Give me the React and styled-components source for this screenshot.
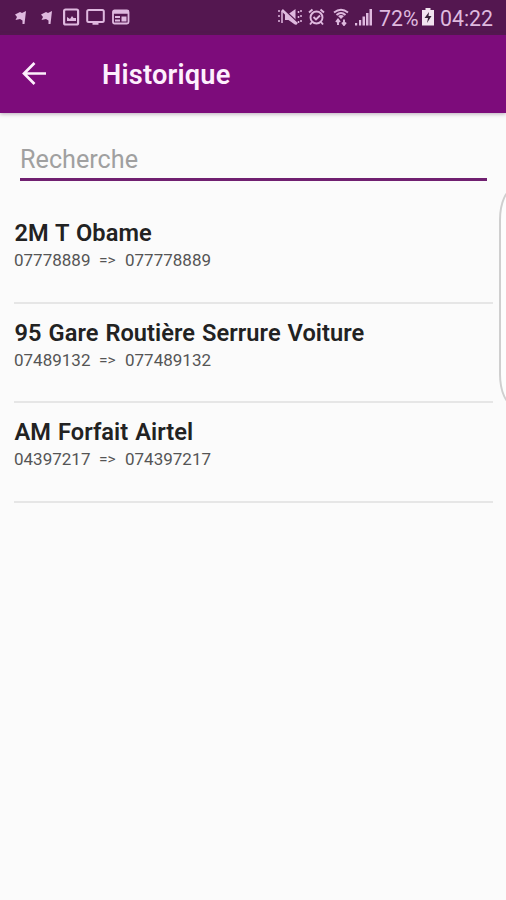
import React from "react";
import styled, { createGlobalStyle } from "styled-components";

const GlobalStyle = createGlobalStyle`
  * { box-sizing: border-box; }
  body { margin: 0; background: #fbfbfb; font-family: Roboto, "Liberation Sans", sans-serif; }
`;

const Screen = styled.div`
  position: relative;
  display: flex;
  flex-direction: column;
  width: 506px;
  height: 900px;
  overflow: hidden;
  background: #fbfbfb;
`;

const StatusBar = styled.div`
  display: flex;
  justify-content: space-between;
  height: 35px;
  flex: none;
  padding: 0 12px 0 14px;
  background: #541750;
  color: #dfb9df;
`;

const StatusGroup = styled.div`
  display: flex;
  align-items: center;
  height: 34px;
`;

const StatusIcon = styled.svg`
  display: block;
  flex: none;
  margin-left: ${(p) => p.$gap || 0}px;
`;

const StatusText = styled.span`
  margin-left: ${(p) => p.$gap || 0}px;
  width: ${(p) => p.$width}px;
  font-size: 21.3px;
  line-height: 35px;
  white-space: nowrap;
  padding-top: 2px;
`;

const AppBar = styled.header`
  display: flex;
  align-items: center;
  flex: none;
  height: 78px;
  padding-left: 22px;
  background: #7d0c7b;
  box-shadow: 0 1px 4px rgba(80, 50, 80, 0.4);
  color: #fdeffd;
`;

const BackButton = styled.button`
  display: flex;
  width: 25px;
  height: 25px;
  margin-top: -2px;
  padding: 0;
  border: 0;
  background: none;
  color: inherit;
`;

const Title = styled.h1`
  margin: 1px 0 0 55px;
  font-size: 27.2px;
  font-weight: 600;
  line-height: 32px;
  letter-spacing: 0.2px;
`;

const SearchField = styled.input`
  flex: none;
  width: 467px;
  height: 46px;
  margin: 22px 0 0 20px;
  padding: 5px 0 0;
  border: 0;
  border-bottom: 3px solid #702070;
  border-radius: 0;
  outline: 0;
  background: transparent;
  font: 400 25.2px/36px Roboto, sans-serif;
  &::placeholder { color: #a0a0a0; opacity: 1; }
`;

const History = styled.ul`
  margin: 23px 13px 0 14px;
  padding: 0;
  list-style: none;
`;

const Entry = styled.li`
  height: 99.5px;
  padding-top: 14px;
  border-bottom: 2px solid #e6e6e6;
`;

const EntryName = styled.div`
  padding-left: 0.5px;
  color: #222;
  font-size: 23.6px;
  font-weight: 600;
  line-height: 30px;
  letter-spacing: 0.06px;
  word-spacing: 1px;
  white-space: nowrap;
`;

const EntryNumbers = styled.div`
  display: flex;
  color: #555;
  font-size: 17px;
  line-height: 24px;
`;

const NumberPart = styled.span`
  width: ${(p) => p.$width}px;
  font-size: ${(p) => p.$size || 17}px;
`;

const EdgeHandle = styled.div`
  position: absolute;
  top: 188px;
  left: 499px;
  width: 30px;
  height: 218px;
  border: 2px solid #cfcfcf;
  border-radius: 18px / 38px;
  background: #fdfdfd;
`;

const FlagIcon = ({ gap }) => (
  <StatusIcon width="14" height="16" viewBox="0 0 14 16" $gap={gap} fill="currentColor">
    <path d="M1 5.5l5-2.5 2 1 4-2-1.5 13H8.5V11.5L6 10l-4.500 1 1.500-3z" />
  </StatusIcon>
);

const entries = [
  { name: "2M T Obame", from: "07778889", to: "077778889" },
  { name: "95 Gare Routière Serrure Voiture", from: "07489132", to: "077489132" },
  { name: "AM Forfait Airtel", from: "04397217", to: "074397217" },
];

export default function App() {
  return (
    <>
      <GlobalStyle />
      <Screen>
        <StatusBar>
          <StatusGroup>
            <FlagIcon />
            <FlagIcon gap={12} />
            <StatusIcon width="17" height="18" viewBox="0 0 17 18" $gap={9} fill="none" stroke="currentColor" strokeWidth="2.2">
              <rect x="1.1" y="1.5" width="14" height="15" rx="1.5" />
              <path d="M4 13V9l3 2 2-3 1.5 2H13v3z" fill="currentColor" stroke="none" />
            </StatusIcon>
            <StatusIcon width="20" height="18" viewBox="0 0 20 18" $gap={6} fill="none" stroke="currentColor" strokeWidth="2">
              <rect x="1.2" y="2" width="16.6" height="12" rx="1.5" />
              <path d="M6.5 15.5h6" strokeWidth="2.5" />
            </StatusIcon>
            <StatusIcon width="18" height="18" viewBox="0 0 18 18" $gap={6} fill="none" stroke="currentColor" strokeWidth="1.8">
              <rect x="1" y="2.5" width="15.5" height="13" rx="1.5" />
              <path d="M1 4h15.5" strokeWidth="3.5" />
              <path d="M3 9h5M3 12.5h5" />
              <path d="M9.5 8.5h5v5h-5z" fill="currentColor" stroke="none" />
            </StatusIcon>
          </StatusGroup>
          <StatusGroup>
            <StatusIcon width="26" height="18" viewBox="0 0 26 18" fill="none" stroke="currentColor" strokeWidth="1.5">
              <path d="M8 6h3.5l7-5v16l-7-5H8z" fill="currentColor" stroke="none" />
              <path d="M5 0l16 15" stroke="#541750" strokeWidth="2" />
              <path d="M5 2l15 14" strokeWidth="2.5" />
              <path d="M5 3v12M2 2v2m0 3v2m0 3v2M21.5 3v2m0 3v2m0 3v2M24 2v2m0 3v2m0 3v2" />
            </StatusIcon>
            <StatusIcon width="17" height="18" viewBox="0 0 17 18" $gap={5} fill="none" stroke="currentColor" strokeWidth="1.9">
              <circle cx="8.5" cy="9.5" r="6" />
              <path d="M1 4.5l3.5-3M16 4.5l-3.5-3M5.5 9l2.5 2.5 4-4M4 14l-2 2.5M13 14l2 2.5" />
            </StatusIcon>
            <StatusIcon width="16" height="18" viewBox="0 0 16 18" $gap={8} fill="none" stroke="currentColor" strokeWidth="1.9">
              <path d="M1 4.5q7-5.5 14 0M3.5 7q4.5-4 9 0" />
              <path d="M5 8q3-2 6 0l-3 3z" fill="currentColor" stroke="none" />
              <path d="M5 17v-5m-2 2l2-2.5L7 14M11 11.5v5m-2-2l2 2.5 2-2.5" />
            </StatusIcon>
            <StatusIcon width="18" height="18" viewBox="0 0 18 18" $gap={6} fill="currentColor">
              <path d="M0 15h2.2v2.5H0zM4 12h2.2v5.5H4zM7.500 8.500h2.500v9H7.500zM11 5h2.500v12.500H11zM14.500 1H17v16.500h-2.500z" />
            </StatusIcon>
            <StatusText $gap={6} $width={39}>72%</StatusText>
            <StatusIcon width="12" height="18" viewBox="0 0 12 18" $gap={4} fill="#f2e3ef">
              <path d="M3.5 0h5v2H12v15.5H0V2h3.5z" />
              <path d="M7 4L2.5 10H6l-1 5 4.5-7H6.5z" fill="#382238" />
            </StatusIcon>
            <StatusText $gap={6} $width={54}>04:22</StatusText>
          </StatusGroup>
        </StatusBar>
        <AppBar>
          <BackButton aria-label="Retour">
            <svg width="25" height="25" viewBox="0 0 25 25" fill="none" stroke="currentColor" strokeWidth="2.7">
              <path d="M24 12.5H3M12.5 2L2 12.5 12.5 23" />
            </svg>
          </BackButton>
          <Title>Historique</Title>
        </AppBar>
        <SearchField placeholder="Recherche" />
        <History>
          {entries.map((e) => (
            <Entry key={e.name}>
              <EntryName>{e.name}</EntryName>
              <EntryNumbers>
                <NumberPart $width={85}>{e.from}</NumberPart>
                <NumberPart $width={26} $size={15.5}>=&gt;</NumberPart>
                <NumberPart $width={90}>{e.to}</NumberPart>
              </EntryNumbers>
            </Entry>
          ))}
        </History>
        <EdgeHandle />
      </Screen>
    </>
  );
}
